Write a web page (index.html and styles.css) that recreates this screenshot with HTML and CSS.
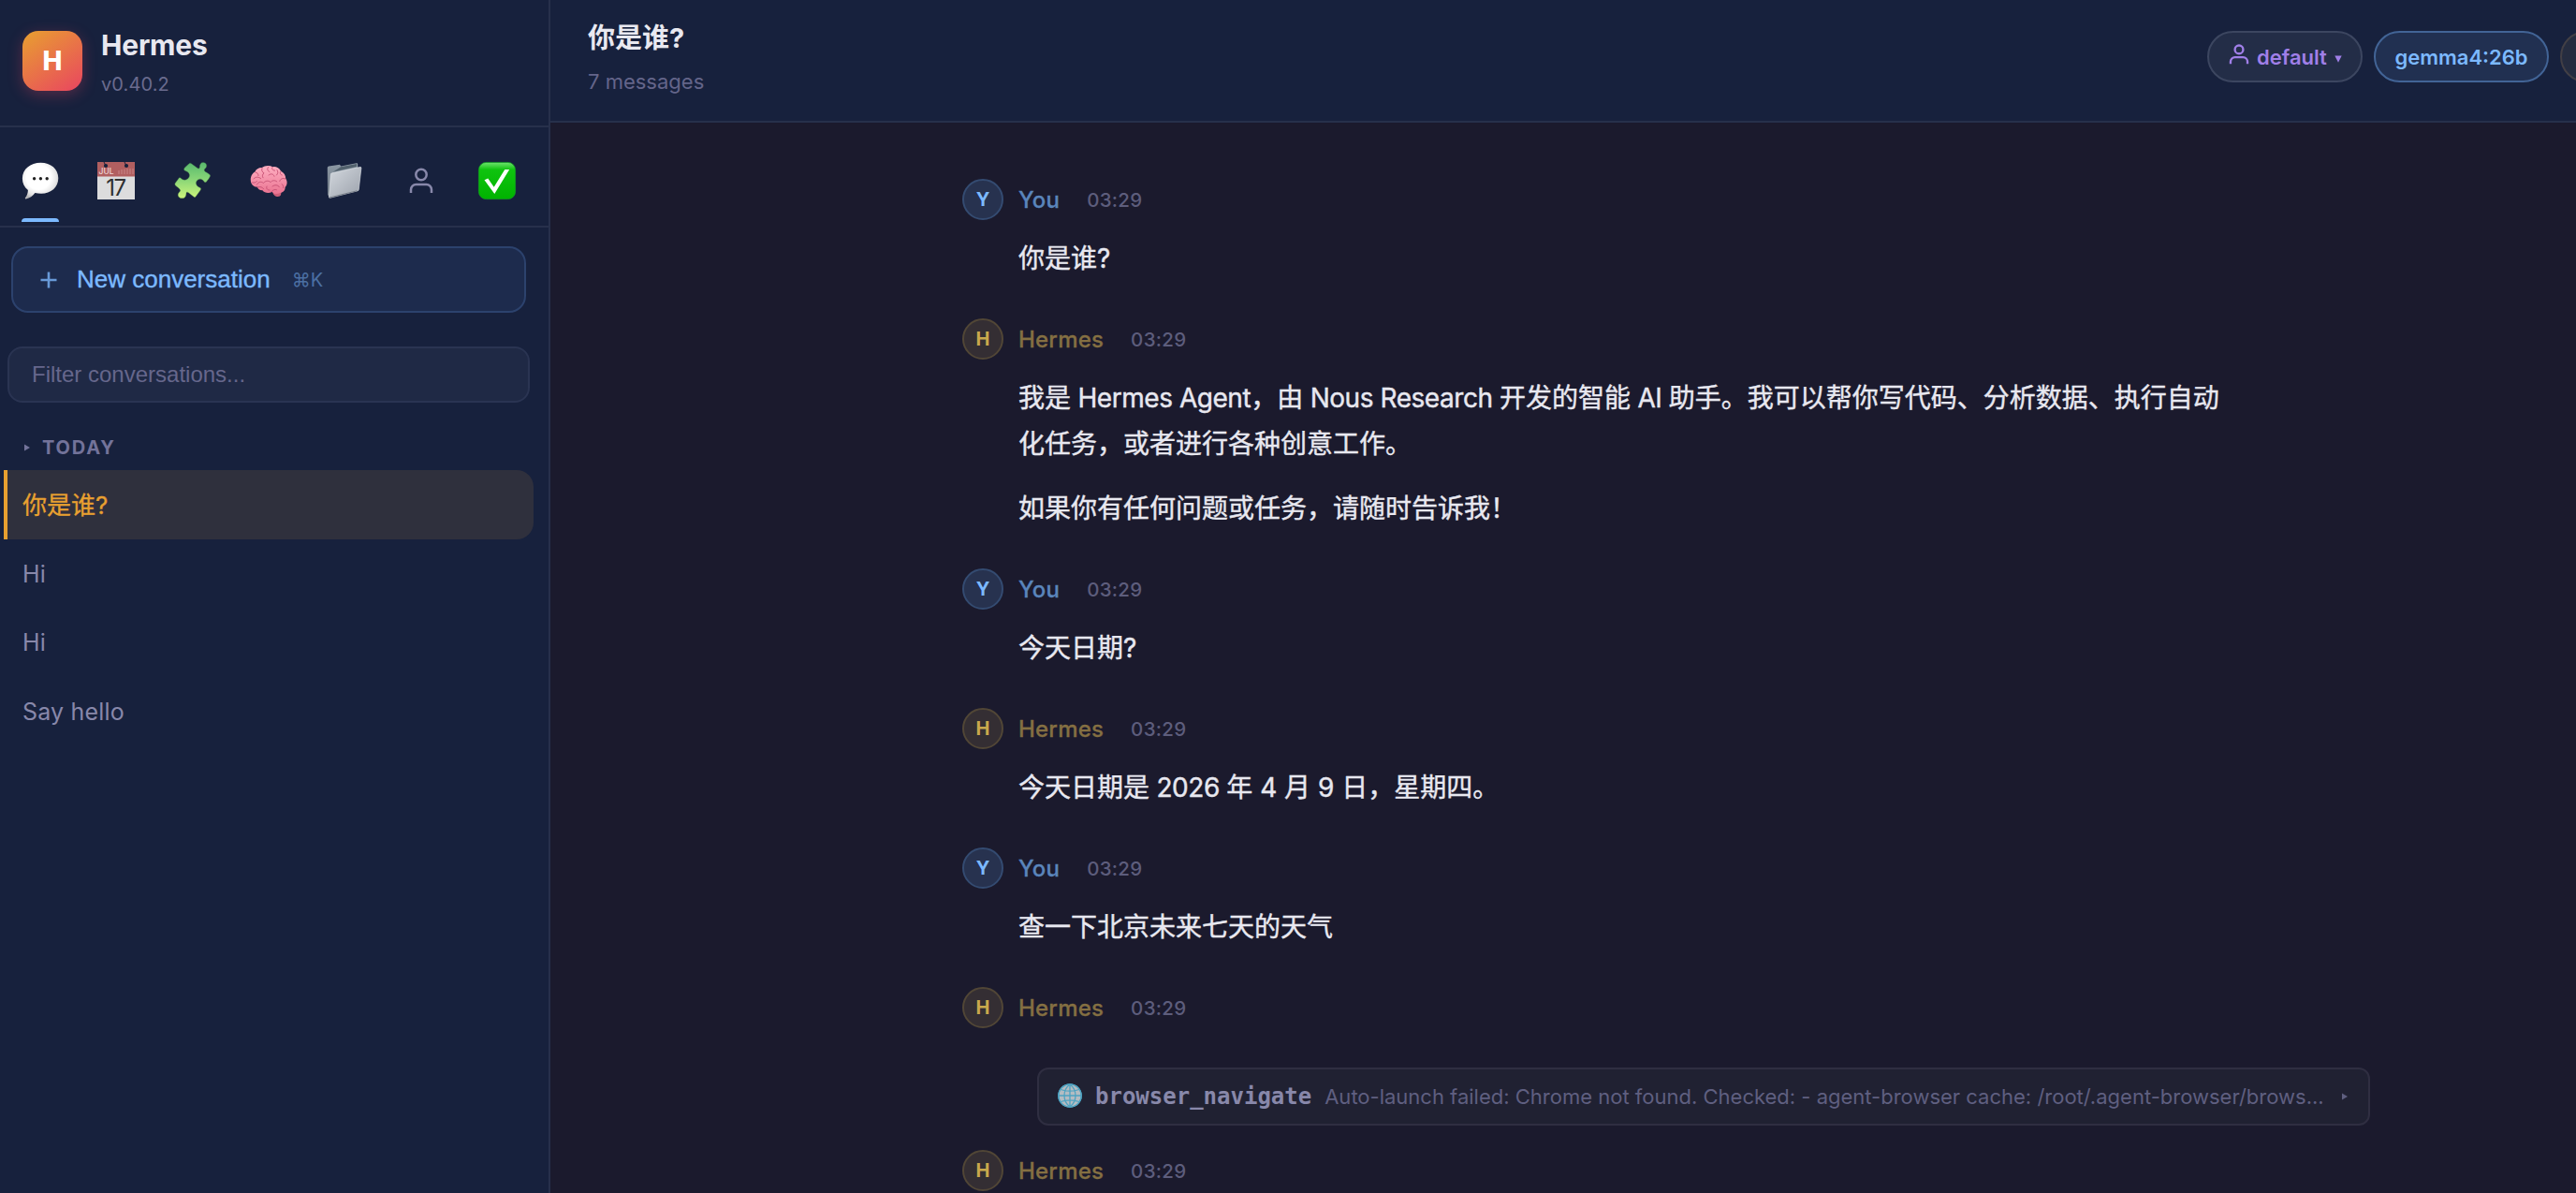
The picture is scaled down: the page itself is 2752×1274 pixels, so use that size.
FILE: index.html
```html
<!DOCTYPE html>
<html lang="zh-CN">
<head>
<meta charset="utf-8">
<title>Hermes</title>
<link rel="stylesheet" href="styles.css">
</head>
<body>
<svg class="defs" aria-hidden="true">
  <defs>
    <radialGradient id="bubble" cx=".45" cy=".4" r=".62"><stop offset=".55" stop-color="#fff"/><stop offset=".82" stop-color="#e4e4e4"/><stop offset="1" stop-color="#b4b4b6"/></radialGradient>
    <linearGradient id="puzzle" x1="0" y1="0" x2="0" y2="1"><stop offset="0" stop-color="#58b96e"/><stop offset=".45" stop-color="#86d477"/><stop offset="1" stop-color="#cdf57c"/></linearGradient>
    <linearGradient id="brain" x1="0" y1="0" x2="0" y2="1"><stop offset="0" stop-color="#ffb0c2"/><stop offset="1" stop-color="#ea7391"/></linearGradient>
    <linearGradient id="folder" x1="0" y1="0" x2="1" y2="1"><stop offset="0" stop-color="#d3d8de"/><stop offset="1" stop-color="#9ca2ac"/></linearGradient>
    <linearGradient id="folderBack" x1="0" y1="0" x2="0" y2="1"><stop offset="0" stop-color="#8d99a5"/><stop offset="1" stop-color="#69747f"/></linearGradient>
    <linearGradient id="check" x1="0" y1="0" x2="0" y2="1"><stop offset="0" stop-color="#6fe36f"/><stop offset=".2" stop-color="#0fc30f"/><stop offset="1" stop-color="#00b300"/></linearGradient>
  </defs>
</svg>
<div class="app">
  <aside class="sidebar">
    <header class="brand">
      <div class="logo">H</div>
      <div class="brand-text">
        <h1 class="brand-name">Hermes</h1>
        <div class="brand-version">v0.40.2</div>
      </div>
    </header>
    <nav class="tabs">
      <div class="tab tab-active">
        <svg class="emoji" viewBox="0 0 40 40"><path d="M20.500.8C31.300.8 39.300 7.500 39.300 17.300S31.500 33.800 21 33.800c-2.400 0-4.600-.2-6.600-.8-2.300 3.400-5.700 5.800-9.800 6.400-.8.1-1-.7-.5-1.300 1.900-2.300 2.700-5.100 2.800-8.100C3 27 .9 22.800.9 17.600.9 7.600 9.500.8 20.500.8z" fill="url(#bubble)"/><circle cx="13.600" cy="17.800" r="1.700" fill="#222"/><circle cx="20.400" cy="17.800" r="1.700" fill="#222"/><circle cx="27.200" cy="17.800" r="1.700" fill="#222"/></svg>
      </div>
      <div class="tab">
        <svg class="emoji" viewBox="0 0 40 40"><path d="M0 0h40v40H0z" fill="#dcdcdd"/><path d="M0 0h40v15.500H0z" fill="#b15f60"/><circle cx="9" cy="4" r="2.100" fill="#17203b"/><circle cx="31" cy="4" r="2.100" fill="#17203b"/><path d="M9 4l-2-4M31 4l-2-4" stroke="#17203b" stroke-width="1"/><path d="M23 9v4M26 8v5M29 7.500V13M32 7v6M35 7v6M38 7v6" stroke="#c98788" stroke-width="1"/><text x="1.600" y="13.400" class="cal-month">JUL</text><text x="19.500" y="35.800" class="cal-day">17</text></svg>
      </div>
      <div class="tab">
        <svg class="emoji" viewBox="0 0 40 40"><path d="M11 6.500c1.500-1.900 3.400-3.300 5.300-5 .8-.6 1.500-.4 2.200.3l6.500 4.800c1.200.8 2.300.3 2.300-1C27.200 2.500 28.700.4 31.200.5c2.700.1 4.300 2.600 3.200 5-.7 1.500-2.500 2-2.100 3.500.2 1 1.600 1.700 3.700 3 1.200.8 2.500 1.500 2.600 2.600 0 1.600-2.600 4.900-4.200 6.700-.9.9-2 .3-2.700-.8-1.300-2-3.500-3-5.800-1.800-2.500 1.300-3.100 4-1.600 6.200 1.100 1.700 3 2 4 2.900.8.900.2 1.900-.6 2.900l-4.600 6.300c-.7.900-1.500.8-2.300.1l-5.500-4.400c-1.200-1-2.300-.6-2.300.8-.1 3-1.400 5.400-4.400 5.300C5.200 38.700 3.300 36 4.500 33.400c.7-1.500 2.400-1.900 2.100-3.200-.3-1.600-3.200-3.300-5-5-.9-.8-1-1.700-.4-2.600l3.900-5.400c.7-.8 1.600-.6 2.400.3 2 2 5 2.300 7.300.3 2.400-2.200 2.100-5.400-.6-7.200-1.200-.9-3-1.100-3.500-2-.3-.7-.1-1.400.3-2.100z" fill="url(#puzzle)" stroke="#3f7440" stroke-opacity=".5" stroke-width=".7"/></svg>
      </div>
      <div class="tab">
        <svg class="emoji" viewBox="0 0 40 40"><path d="M24.500 31c-.5 2.800 1.300 5.500 4.600 6 2 .2 3.600-.6 4-2.200l.8-4.800z" fill="#cf5f79"/><path d="M.8 19.500C.5 15 3 11.800 5.400 10.500 6.600 7.500 9.800 5.800 12.900 6c3-2.600 8.300-2.700 11.500-.8 3.600-.5 7.200 1.500 8.700 4.600 3.200 1.500 5.200 4.700 5.100 7.800 2.100 3 1.800 7.200-.6 9.500.2 3.300-2 5.700-5.200 5.800-3.700 1.900-6.800 1.300-8.700-.9-3.700 1.700-8.200 1.200-10.300-1.700-3 .1-5-1.300-5.500-3.700C4.700 26.900.9 24.500.8 19.500z" fill="url(#brain)"/><path d="M6 11c2 .4 2.900 1.500 3 3.500M4 18c1.700-2.300 5.200-2.500 7.600-.4M13 6.500c-.8 2.500 0 4.200 2 5.300-1.800 1.600-2 3.300-1 5M20 5c-2 2-1.600 4.300.9 5.500M24 5.500c-1 2 .2 3.600 2.600 3.600M20 14c2.500-2 5.200-1.400 6 1.300M29 8.500c1.500 1.800 1 4-.5 5.500M33 10c-1.400 1.200-.8 3.500 1.200 4M37.800 18c-2.700-1.300-5.500 0-6 2.500M7.500 24c1.400-3 4.600-3.500 7-1.500 1.900-2.700 5.400-3 7.600-.9 1.600-2.200 4.600-2.500 6.700-.7M8 27c3.600-1 5.200-.2 6.500 1.600M18 26c-1 2 .5 4.300 3 4M24 26c2.500-2 6-1.700 7.500.8M34 23.500c1.400.8 2 2.300 1.600 4M23 31.700c1.500-2 3.500-2.700 5.500-2M2.500 22c2.200.3 3.500 0 5-1.400" fill="none" stroke="#c54f73" stroke-width=".9" stroke-linecap="round"/></svg>
      </div>
      <div class="tab">
        <svg class="emoji" viewBox="0 0 40 40"><path d="M1.800 6.300c0-1 .5-1.500 1.500-1.800L15 2.800l1.200 1.700 16.500-3.300c1-.2 1.500.3 1.500 1.300V30L4.500 38 2 35z" fill="url(#folderBack)"/><path d="M16 5.200l17-3.300v3L8 10.500z" fill="#52616d"/><path d="M5.300 13.500c.1-1 .6-1.500 1.600-1.700L36.500 5.400c1-.2 1.500.3 1.400 1.300l-2.600 22.500c-.1 1-.6 1.500-1.500 1.700L4.600 38.300c-.8.2-1.200-.3-1.100-1.200z" fill="url(#folder)" stroke="#e4e8ed" stroke-width=".6"/><path d="M3.800 38l30-7.300" stroke="#616873" stroke-width=".8"/></svg>
      </div>
      <div class="tab">
        <svg class="person" viewBox="0 0 28 28"><circle cx="14" cy="7.500" r="5.700"/><path d="M3 27v-3.500a5.500 5.500 0 0 1 5.500-5.500h11a5.500 5.500 0 0 1 5.500 5.500V27"/></svg>
      </div>
      <div class="tab">
        <svg class="emoji" viewBox="0 0 40 40"><rect x=".4" y=".4" width="39.200" height="39.200" rx="8" fill="url(#check)" stroke="#119a22" stroke-width=".8"/><path d="M6.500 19.300l3.800-1.700 6.400 9.200L28.300 7.900h4.900L17.300 34z" fill="#fff"/></svg>
      </div>
    </nav>
    <button class="new-chat"><svg class="plus" viewBox="0 0 18 18"><path d="M9 .5v17M.5 9h17"/></svg><span class="new-chat-label">New conversation</span><span class="shortcut">⌘K</span></button>
    <input class="filter" type="text" placeholder="Filter conversations...">
    <div class="group"><svg class="caret" viewBox="0 0 8 8"><path d="M1 .5l6 3.500-6 3.500z"/></svg><span>TODAY</span></div>
    <ul class="chats">
      <li class="chat chat-active">你是谁?</li>
      <li class="chat">Hi</li>
      <li class="chat">Hi</li>
      <li class="chat">Say hello</li>
    </ul>
  </aside>
  <main class="main">
    <header class="topbar">
      <div class="topbar-text">
        <h2 class="topbar-title">你是谁?</h2>
        <div class="topbar-meta">7 messages</div>
      </div>
      <div class="chips">
        <div class="chip chip-profile"><svg class="chip-person" viewBox="0 0 28 28"><circle cx="14" cy="7.500" r="5.600"/><path d="M2.500 27v-3a6 6 0 0 1 6-6h11a6 6 0 0 1 6 6v3"/></svg><span>default</span><svg class="chip-caret" viewBox="0 0 8 8"><path d="M.3.5h7.400L4 7.800z"/></svg></div>
        <div class="chip chip-model">gemma4:26b</div>
        <div class="chip chip-extra"></div>
      </div>
    </header>
    <section class="messages">
      <article class="msg msg-user">
        <div class="msg-head"><span class="avatar">Y</span><span class="author">You</span><time class="time">03:29</time></div>
        <div class="body"><p>你是谁?</p></div>
      </article>
      <article class="msg msg-bot">
        <div class="msg-head"><span class="avatar">H</span><span class="author">Hermes</span><time class="time">03:29</time></div>
        <div class="body"><p>我是<span class="latin"> Hermes Agent</span>，由<span class="latin"> Nous Research </span>开发的智能<span class="latin"> AI </span>助手。我可以帮你写代码、分析数据、执行自动<br>化任务，或者进行各种创意工作。</p><p>如果你有任何问题或任务，请随时告诉我！</p></div>
      </article>
      <article class="msg msg-user">
        <div class="msg-head"><span class="avatar">Y</span><span class="author">You</span><time class="time">03:29</time></div>
        <div class="body"><p>今天日期?</p></div>
      </article>
      <article class="msg msg-bot">
        <div class="msg-head"><span class="avatar">H</span><span class="author">Hermes</span><time class="time">03:29</time></div>
        <div class="body"><p>今天日期是<span class="latin"> 2026 </span>年 4 月 9 日，星期四。</p></div>
      </article>
      <article class="msg msg-user">
        <div class="msg-head"><span class="avatar">Y</span><span class="author">You</span><time class="time">03:29</time></div>
        <div class="body"><p>查一下北京未来七天的天气</p></div>
      </article>
      <article class="msg msg-bot msg-tool">
        <div class="msg-head"><span class="avatar">H</span><span class="author">Hermes</span><time class="time">03:29</time></div>
        <div class="tool">
          <svg class="globe" viewBox="0 0 26 26"><circle cx="13" cy="13" r="12.200" fill="#b4bcc2"/><path d="M13 1v24M1 13h24M3 6.500c6 2 14 2 20 0M3 19.500c6-2 14-2 20 0M13 1C5 7 5 19 13 25M13 1c8 6 8 18 0 24"/><circle cx="13" cy="13" r="12.200"/></svg>
          <span class="tool-name">browser_navigate</span>
          <span class="tool-text">Auto-launch failed: Chrome not found. Checked: - agent-browser cache: /root/.agent-browser/brows...</span>
          <svg class="caret tool-caret" viewBox="0 0 8 8"><path d="M1 .5l6 3.500-6 3.500z"/></svg>
        </div>
      </article>
      <article class="msg msg-bot">
        <div class="msg-head"><span class="avatar">H</span><span class="author">Hermes</span><time class="time">03:29</time></div>
      </article>
    </section>
  </main>
</div>
</body>
</html>
```
FILE: styles.css
```css
* { box-sizing: border-box; margin: 0; padding: 0; }

body {
  background: #1b1a2d;
  color: #e8e8f0;
  font-family: Inter, "Noto Sans CJK SC", sans-serif;
  overflow: hidden;
}

.defs { position: absolute; width: 0; height: 0; }

.app { display: flex; width: 100vw; height: 100vh; }

/* Sidebar */
.sidebar {
  flex: none;
  display: flex;
  flex-direction: column;
  width: 588px;
  background: #17213d;
  border-right: 2px solid #27304b;
}

.brand {
  display: flex;
  gap: 20px;
  height: 136px;
  padding: 33px 24px 0;
  border-bottom: 2px solid #27304b;
}

.logo {
  display: flex;
  align-items: center;
  justify-content: center;
  width: 64px;
  height: 64px;
  border-radius: 17px;
  background: linear-gradient(145deg, #e8a030, #e94560);
  box-shadow: 0 4px 16px rgba(233, 69, 96, .3);
  color: #fff;
  font-size: 28px;
  font-weight: 800;
}

.brand-text { margin-top: -3px; }
.brand-name { font-size: 30px; line-height: 36px; font-weight: 700; letter-spacing: -.2px; }
.brand-version { margin-top: 9px; font-size: 20px; line-height: 30px; color: #6a6b8e; letter-spacing: .1px; }

.tabs {
  display: grid;
  grid-template-columns: repeat(7, 1fr);
  height: 107px;
  padding: 0 14px 0 2px;
  border-bottom: 2px solid #27304b;
}

.tab {
  position: relative;
  display: flex;
  align-items: center;
  justify-content: center;
  padding-top: 9px;
}

.tab-active::after {
  content: "";
  position: absolute;
  bottom: 4px;
  width: 40px;
  height: 4px;
  border-radius: 4px 4px 0 0;
  background: #7cb9ff;
}

.emoji { width: 40px; height: 40px; overflow: visible; }
.cal-month { font: 500 8.500px Inter, sans-serif; fill: #ecd5d5; }
.cal-day { font: 400 24px Inter, sans-serif; letter-spacing: -1.500px; fill: #303030; text-anchor: middle; }
.person { width: 28px; height: 28px; fill: none; stroke: #8888aa; stroke-width: 2.500; }

.new-chat {
  display: flex;
  align-items: center;
  width: 550px;
  height: 71px;
  margin: 20px 0 0 12px;
  padding: 0 29px;
  border: 2px solid #2c426d;
  border-radius: 18px;
  background: #1d2b4d;
  color: #7cb9ff;
  font: 500 26px Inter, sans-serif;
}

.plus { width: 18px; height: 18px; stroke: #6899d7; stroke-width: 2.600; }
.new-chat-label {
  margin-left: 21px;
  font-family: "Liberation Sans", sans-serif;
  font-weight: 400;
  -webkit-text-stroke: .4px;
}
.shortcut { margin-left: 23px; font-size: 20px; font-weight: 400; color: #4b6fa2; }

.filter {
  width: 558px;
  height: 60px;
  margin: 36px 0 0 8px;
  padding: 0 24px;
  border: 2px solid #2a3452;
  border-radius: 16px;
  background: #1f2945;
  font: 24px "Liberation Sans", sans-serif;
}
.filter::placeholder { color: #66678c; opacity: 1; }

.group {
  display: flex;
  align-items: center;
  gap: 12px;
  height: 72px;
  padding: 24px 0 0 25px;
  color: #73739a;
  font-size: 20px;
  font-weight: 700;
  letter-spacing: 1.800px;
}
.caret { width: 8px; height: 8px; fill: currentColor; }

.chats { list-style: none; padding-left: 4px; }
.chat {
  display: flex;
  align-items: center;
  width: 566px;
  height: 73.600px;
  padding: 1px 0 0 20px;
  color: #8888aa;
  font-size: 25px;
  letter-spacing: .2px;
}
.chat-active {
  padding: 0 0 3px 16px;
  border-left: 4px solid #e8a030;
  border-radius: 0 18px 18px 0;
  background: #2f303d;
  color: #e8a030;
  font-size: 26px;
  letter-spacing: 0;
  -webkit-text-stroke: .3px;
}

/* Conversation */
.main { flex: 1; min-width: 0; display: flex; flex-direction: column; overflow: hidden; }

.topbar {
  flex: none;
  display: flex;
  justify-content: space-between;
  height: 131px;
  padding-left: 40px;
  border-bottom: 2px solid #27304b;
  background: #17213d;
}
.topbar-text { padding-top: 20px; }
.topbar-title { font-size: 29px; line-height: 42px; font-weight: 700; }
.topbar-meta { margin-top: 10px; font-size: 22px; line-height: 30px; color: #64658a; }

.chips { display: flex; gap: 12px; margin-right: -72px; padding-top: 33px; }
.chip {
  display: flex;
  align-items: center;
  height: 55px;
  padding: 0 20px;
  border: 2px solid #3c4660;
  border-radius: 28px;
  background: #232d47;
  font-size: 22px;
  font-weight: 600;
}
.chip-profile { width: 166px; padding: 0 0 0 21px; color: #a07fe8; }
.chip-person { width: 22px; height: 22px; margin: -5px 8px 0 0; fill: none; stroke: currentColor; stroke-width: 3; }
.chip-caret { width: 8px; height: 8px; margin: 4px 0 0 8px; fill: currentColor; }
.chip-model { width: 187px; justify-content: center; padding: 0; border-color: #426496; background: #213051; color: #7cb9ff; }
.chip-extra { width: 89px; border-color: #423f45; background: #252c40; }

.messages { padding: 60px 0 0 440px; }
.msg { padding-bottom: 39px; }
.msg-head { display: flex; align-items: center; height: 44px; }
.avatar {
  display: flex;
  align-items: center;
  justify-content: center;
  width: 44px;
  height: 44px;
  border: 2px solid;
  border-radius: 50%;
  font-size: 20px;
  font-weight: 700;
}
.author { margin-left: 16px; font-size: 24px; font-weight: 500; letter-spacing: .2px; -webkit-text-stroke: .3px; }
.time { margin-left: 29px; color: #5d5d7c; font-size: 20.500px; font-weight: 500; letter-spacing: .3px; }
.msg-user .avatar { border-color: #344b71; background: #27324f; color: #7cb9ff; }
.msg-user .author { color: #5a85bb; }
.msg-bot .avatar { border-color: #514636; background: #342e33; color: #c9a84c; }
.msg-bot .author { color: #846f42; }

.body {
  padding: 17px 0 0 60px;
  font-size: 28px;
  line-height: 49px;
  white-space: nowrap;
  -webkit-text-stroke: .4px;
}
.body p + p { margin-top: 20px; }
.latin { letter-spacing: -.45px; }

.msg-tool { padding-bottom: 26px; }
.tool {
  display: flex;
  align-items: center;
  width: 1424px;
  height: 62px;
  margin: 42px 0 0 80px;
  padding: 0 21px 0 20px;
  border: 2px solid #2f2e41;
  border-radius: 12px;
  background: #202132;
  white-space: nowrap;
}
.globe { width: 26px; height: 26px; margin-top: -2px; fill: none; stroke: #4da3c2; stroke-width: 1.300; }
.tool-name { margin-left: 14px; color: #8888aa; font: 700 24px "DejaVu Sans Mono", monospace; }
.tool-text { margin-left: 14px; color: #5f5f80; font-size: 22px; }
.tool-caret { margin-left: auto; color: #5f5f80; }
```
